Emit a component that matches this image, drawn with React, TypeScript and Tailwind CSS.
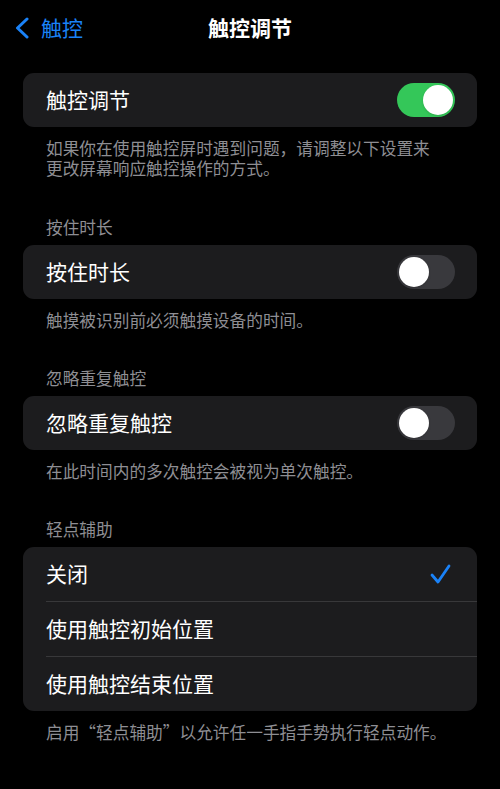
import React from "react";

const font = { fontFamily: '"Noto Sans CJK SC", "Noto Sans", sans-serif' };

function Toggle({ on }: { on: boolean }) {
  return (
    <div
      className={`relative w-[58px] h-[34px] rounded-full ${on ? "bg-[#34c759]" : "bg-[#39393d]"}`}
    >
      <div
        className={`absolute top-[2px] w-[30px] h-[30px] rounded-full bg-white shadow ${on ? "right-[2px]" : "left-[2px]"}`}
      />
    </div>
  );
}

function Footer({ children }: { children: React.ReactNode }) {
  return (
    <div className="px-[46px] pt-[11px] text-[16.7px] leading-[20px] text-[#8e8e93]">{children}</div>
  );
}

function Header({ children, mt }: { children: React.ReactNode; mt: string }) {
  return (
    <div className={`px-[46px] ${mt} mb-[8px] text-[16.7px] leading-[20px] text-[#8e8e93]`}>{children}</div>
  );
}

function ToggleCard({ label, on }: { label: string; on: boolean }) {
  return (
    <div className="mx-[23px] h-[54px] rounded-[11px] bg-[#1c1c1e] flex items-center justify-between pl-[23px] pr-[22px]">
      <span className="text-[21px] text-white">{label}</span>
      <Toggle on={on} />
    </div>
  );
}

export default function App() {
  return (
    <div className="w-[500px] h-[789px] bg-black overflow-hidden" style={font}>
      <div className="relative h-[56px] flex items-center justify-center">
        <div className="absolute left-[14px] top-0 h-[56px] flex items-center text-[#1a82f7]">
          <svg width="16" height="22" viewBox="0 0 16 22" className="mr-[11px]">
            <path d="M13 2 L3.5 11 L13 20" fill="none" stroke="#1a82f7" strokeWidth="3" strokeLinecap="round" strokeLinejoin="round" />
          </svg>
          <span className="text-[21px]">触控</span>
        </div>
        <span className="text-[21px] font-semibold text-white">触控调节</span>
      </div>

      <div className="mt-[17px]">
        <ToggleCard label="触控调节" on={true} />
      </div>
      <Footer>
        如果你在使用触控屏时遇到问题，请调整以下设置来
        <br />
        更改屏幕响应触控操作的方式。
      </Footer>

      <Header mt="mt-[39px]">按住时长</Header>
      <ToggleCard label="按住时长" on={false} />
      <Footer>触摸被识别前必须触摸设备的时间。</Footer>

      <Header mt="mt-[38px]">忽略重复触控</Header>
      <ToggleCard label="忽略重复触控" on={false} />
      <Footer>在此时间内的多次触控会被视为单次触控。</Footer>

      <Header mt="mt-[38px]">轻点辅助</Header>
      <div className="mx-[23px] rounded-[11px] bg-[#1c1c1e] overflow-hidden">
        <div className="h-[54px] flex items-center justify-between pl-[23px] pr-[26px]">
          <span className="text-[21px] text-white">关闭</span>
          <svg width="22" height="22" viewBox="0 0 22 22">
            <path d="M3 12 L9 19 L20 3" fill="none" stroke="#1a82f7" strokeWidth="2.8" strokeLinecap="round" strokeLinejoin="round" />
          </svg>
        </div>
        <div className="ml-[23px] h-px bg-[#38383a]" />
        <div className="h-[54px] flex items-center pl-[23px]">
          <span className="text-[21px] text-white">使用触控初始位置</span>
        </div>
        <div className="ml-[23px] h-px bg-[#38383a]" />
        <div className="h-[54px] flex items-center pl-[23px]">
          <span className="text-[21px] text-white">使用触控结束位置</span>
        </div>
      </div>
      <Footer>启用“轻点辅助”以允许任一手指手势执行轻点动作。</Footer>
    </div>
  );
}
